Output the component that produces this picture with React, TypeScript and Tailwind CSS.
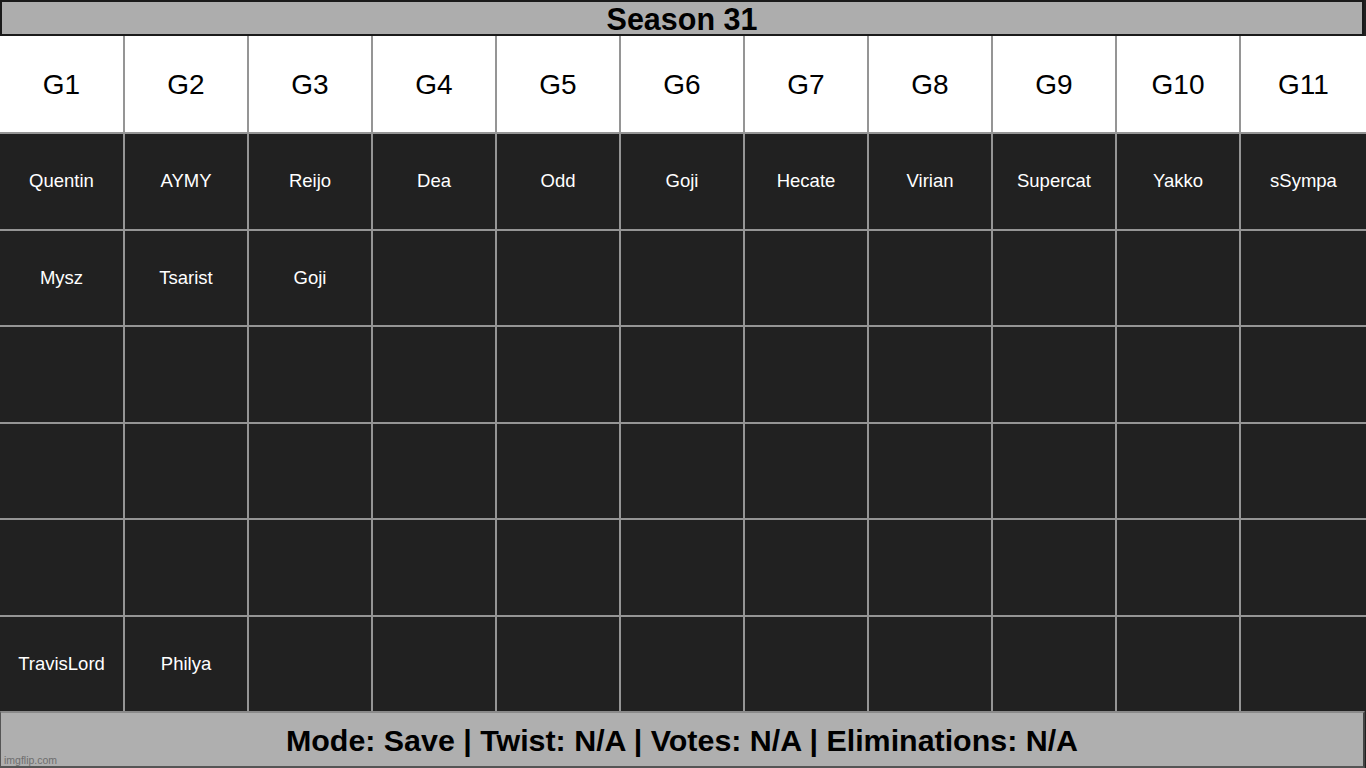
import React from "react";

const heads = ["G1", "G2", "G3", "G4", "G5", "G6", "G7", "G8", "G9", "G10", "G11"];
const rows: string[][] = [
  ["Quentin", "AYMY", "Reijo", "Dea", "Odd", "Goji", "Hecate", "Virian", "Supercat", "Yakko", "sSympa"],
  ["Mysz", "Tsarist", "Goji", "", "", "", "", "", "", "", ""],
  ["", "", "", "", "", "", "", "", "", "", ""],
  ["", "", "", "", "", "", "", "", "", "", ""],
  ["", "", "", "", "", "", "", "", "", "", ""],
  ["TravisLord", "Philya", "", "", "", "", "", "", "", "", ""],
];

export default function App() {
  return (
    <div
      className="relative w-[1366px] h-[768px] flex flex-col bg-[#212121] overflow-hidden"
      style={{ fontFamily: '"Liberation Sans", Arial, sans-serif' }}
    >
      <div className="h-[36px] shrink-0 bg-[#adadad] border-2 border-[#1a1a1a] mr-[2px] flex items-center justify-center">
        <span className="text-[30.5px] font-bold text-black leading-none pt-[2px]">Season 31</span>
      </div>
      <div className="flex-1 grid grid-cols-[123px_repeat(9,122px)_1fr] grid-rows-[96px_repeat(6,1fr)] gap-[2px] bg-[#959595]">
        {heads.map((h) => (
          <div key={h} className="bg-white flex items-center justify-center text-[28px] text-black pt-[2px]">
            {h}
          </div>
        ))}
        {rows.flatMap((r, i) =>
          r.map((c, j) => (
            <div
              key={`${i}-${j}`}
              className="bg-[#212121] flex items-center justify-center text-[18.5px] text-white"
            >
              {c}
            </div>
          ))
        )}
      </div>
      <div className="h-[57px] shrink-0 bg-[#afafaf] border-t-2 border-t-[#8a8a8a] border-l border-b-2 border-r-2 border-l-[#555] border-b-[#555] border-r-[#444] mr-[1px] flex items-center justify-center">
        <span className="text-[30.4px] font-bold text-black leading-none pt-[1px]">
          Mode: Save | Twist: N/A | Votes: N/A | Eliminations: N/A
        </span>
      </div>
      <span className="absolute left-[4px] bottom-[3px] text-[10.5px] text-[#6e6e6e] leading-none">
        imgflip.com
      </span>
    </div>
  );
}
